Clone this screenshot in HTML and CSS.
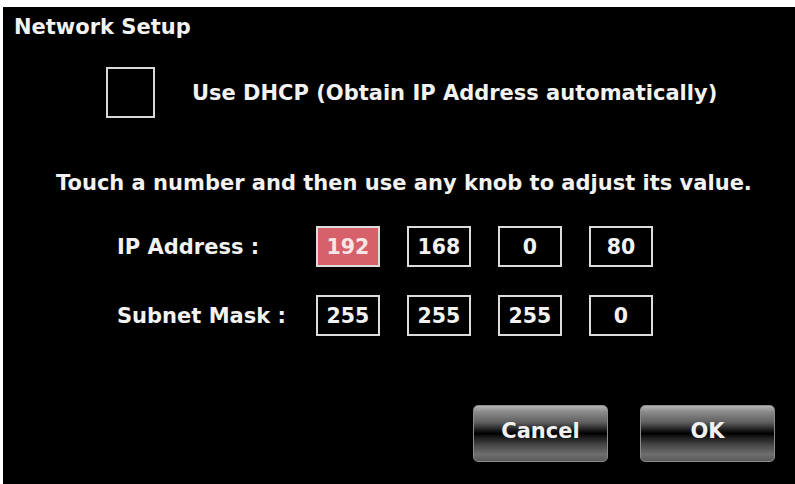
FILE: index.html
```html
<!DOCTYPE html>
<html>
<head>
<meta charset="utf-8">
<link rel="stylesheet" href="styles.css">
</head>
<body>
<div class="screen">
  <div class="title">Network Setup</div>
  <div class="dhcp">
    <div class="checkbox"></div>
    <div class="dhcp-label">Use DHCP (Obtain IP Address automatically)</div>
  </div>
  <div class="hint">Touch a number and then use any knob to adjust its value.</div>
  <div class="field field-ip">
    <div class="label">IP Address :</div>
    <div class="boxes">
      <div class="num num-active">192</div>
      <div class="num">168</div>
      <div class="num">0</div>
      <div class="num">80</div>
    </div>
  </div>
  <div class="field field-mask">
    <div class="label">Subnet Mask :</div>
    <div class="boxes">
      <div class="num">255</div>
      <div class="num">255</div>
      <div class="num">255</div>
      <div class="num">0</div>
    </div>
  </div>
  <div class="actions">
    <div class="btn">Cancel</div>
    <div class="btn">OK</div>
  </div>
</div>
</body>
</html>
```

FILE: styles.css
```css
html, body {
  margin: 0;
  padding: 0;
  background: #ffffff;
}

body {
  width: 795px;
  height: 484px;
  overflow: hidden;
}

.screen {
  margin: 7px 0 0 3px;
  width: 792px;
  height: 477px;
  background: #000000;
  box-sizing: border-box;
  padding-top: 8px;
  display: flex;
  flex-direction: column;
  font-family: "DejaVu Sans", "Liberation Sans", sans-serif;
  font-weight: bold;
  font-size: 21px;
  line-height: 24px;
  color: #f2f2f2;
}

.title {
  padding-left: 11px;
}

.dhcp {
  margin-top: 28px;
  padding-left: 103px;
  display: flex;
  align-items: center;
  gap: 37px;
}

.checkbox {
  width: 49px;
  height: 51px;
  box-sizing: border-box;
  border: 2px solid #d8d8d8;
}

.hint {
  margin-top: 53px;
  padding-left: 53px;
}

.field {
  display: flex;
  align-items: center;
  padding-left: 114px;
}

.field-ip {
  margin-top: 31px;
}

.field-mask {
  margin-top: 28px;
}

.label {
  width: 199px;
}

.boxes {
  display: flex;
  gap: 27px;
}

.num {
  width: 64px;
  height: 41px;
  box-sizing: border-box;
  border: 2px solid #dcdcdc;
  display: flex;
  align-items: center;
  justify-content: center;
  font-size: 20.5px;
}

.num-active {
  background: #d6616b;
  color: #f8e6e6;
}

.actions {
  margin-top: 69px;
  display: flex;
  justify-content: flex-end;
  gap: 32px;
  padding-right: 20px;
}

.btn {
  width: 135px;
  height: 57px;
  box-sizing: border-box;
  border: 1px solid #8a8a8a;
  border-radius: 5px;
  background: linear-gradient(to bottom,
    #b4b4b4 0%,
    #8c8c8c 10%,
    #5e5e5e 30%,
    #1a1a1a 44%,
    #000000 50%,
    #1e1e1e 58%,
    #4a4a4a 72%,
    #6e6e6e 88%,
    #5a5a5a 100%);
  display: flex;
  align-items: center;
  justify-content: center;
  padding-bottom: 6px;
  font-size: 21px;
  color: #f0f0f0;
}
```
